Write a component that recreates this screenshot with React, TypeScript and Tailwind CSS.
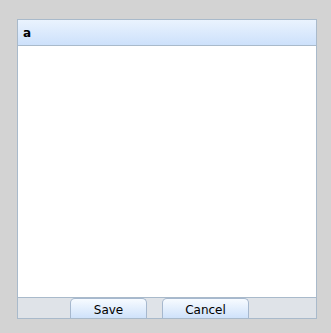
export default function App() {
  return (
    <div className="w-[331px] h-[333px] bg-[#d3d3d3] pt-[19px] pl-[17px] font-['Tahoma','DejaVu_Sans',sans-serif]">
      <div className="w-[300px] h-[300px] border border-[#a9bacb] bg-white flex flex-col">
        <div className="h-[26px] border-b border-[#a9bacb] bg-gradient-to-b from-[#eaf3fe] to-[#cde1fb] flex items-center px-[5px] text-[12px] font-bold text-black">
          a
        </div>
        <div className="flex-1 bg-white" />
        <div className="h-[21px] border-t border-[#a9bacb] bg-[#dfe3e8] flex items-end pl-[52px] gap-[15px]">
          <button className="w-[77px] h-[20px] pt-[2px] rounded-t-[5px] border border-b-0 border-[#a6b8ce] bg-gradient-to-b from-[#f7fbff] to-[#cfe2fa] text-[12px] text-black leading-none">
            Save
          </button>
          <button className="w-[87px] h-[20px] pt-[2px] rounded-t-[5px] border border-b-0 border-[#a6b8ce] bg-gradient-to-b from-[#f7fbff] to-[#cfe2fa] text-[12px] text-black leading-none">
            Cancel
          </button>
        </div>
      </div>
    </div>
  );
}
